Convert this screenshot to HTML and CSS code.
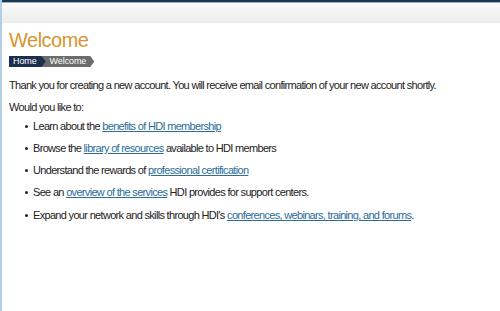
FILE: index.html
```html
<!DOCTYPE html>
<html>
<head>
<meta charset="utf-8">
<link rel="stylesheet" href="styles.css">
</head>
<body>
<div class="frame">
  <div class="topline"></div>
  <div class="band"></div>
  <div class="content">
    <h1 class="title">Welcome</h1>
    <div class="crumbs">
      <span class="crumb home">Home</span><span class="crumb cur">Welcome</span>
    </div>
    <p class="para">Thank you for creating a new account. You will receive email confirmation of your new account shortly.</p>
    <p class="para">Would you like to:</p>
    <ul class="list">
      <li>Learn about the <a href="#">benefits of HDI membership</a></li>
      <li>Browse the <a href="#">library of resources</a> available to HDI members</li>
      <li>Understand the rewards of <a href="#">professional certification</a></li>
      <li>See an <a href="#">overview of the services</a> HDI provides for support centers.</li>
      <li>Expand your network and skills through HDI's <a href="#">conferences, webinars, training, and forums</a>.</li>
    </ul>
  </div>
</div>
</body>
</html>
```
FILE: styles.css
```css
html, body { margin: 0; padding: 0; background: #fff; }
body { font-family: "Liberation Sans", Arial, sans-serif; color: #222; }
.frame {
  width: 500px; height: 311px; box-sizing: border-box;
  border-left: 2px solid #b4cfe3;
  overflow: hidden;
}
.topline { height: 2px; background: #1e3658; border-bottom: 1px solid #9fb3c8; }
.band { height: 20px; background: linear-gradient(#fbfbfb, #ececec); }
.content { padding: 0 0 0 7px; }
.title {
  margin: 5px 0 0 0; font-size: 20px; font-weight: normal; line-height: 24px;
  letter-spacing: -0.5px; color: #d6952e;
}
.crumbs { display: flex; margin-top: 4px; height: 11px; }
.crumb {
  font-size: 9px; line-height: 11px; color: #fff; padding: 0 6px 0 4px; position: relative;
  letter-spacing: -0.1px;
}
.home { background: #1a2e4d; padding-right: 9px; clip-path: polygon(0 0, calc(100% - 4px) 0, 100% 50%, calc(100% - 4px) 100%, 0 100%); z-index: 1; margin-right: -4px; }
.cur { background: #6c6c6c; padding-left: 8px; padding-right: 8px; clip-path: polygon(0 0, calc(100% - 4px) 0, 100% 50%, calc(100% - 4px) 100%, 0 100%); }
.para { font-size: 11px; line-height: 13px; margin: 12px 0 0 0; letter-spacing: -0.68px; }
.para + .para { margin-top: 9px; }
.list { list-style: none; margin: 0; padding: 0 0 0 24px; font-size: 11px; line-height: 13px; letter-spacing: -0.68px; }
.list li { margin-top: 9px; position: relative; }
.list li:first-child { margin-top: 6px; }
.list li:last-child { margin-top: 10px; }
.list li::before {
  content: ""; position: absolute; left: -8px; top: 5px;
  width: 3px; height: 3px; border-radius: 50%; background: #222;
}
a { color: #2b6c98; text-decoration: underline; }
```
